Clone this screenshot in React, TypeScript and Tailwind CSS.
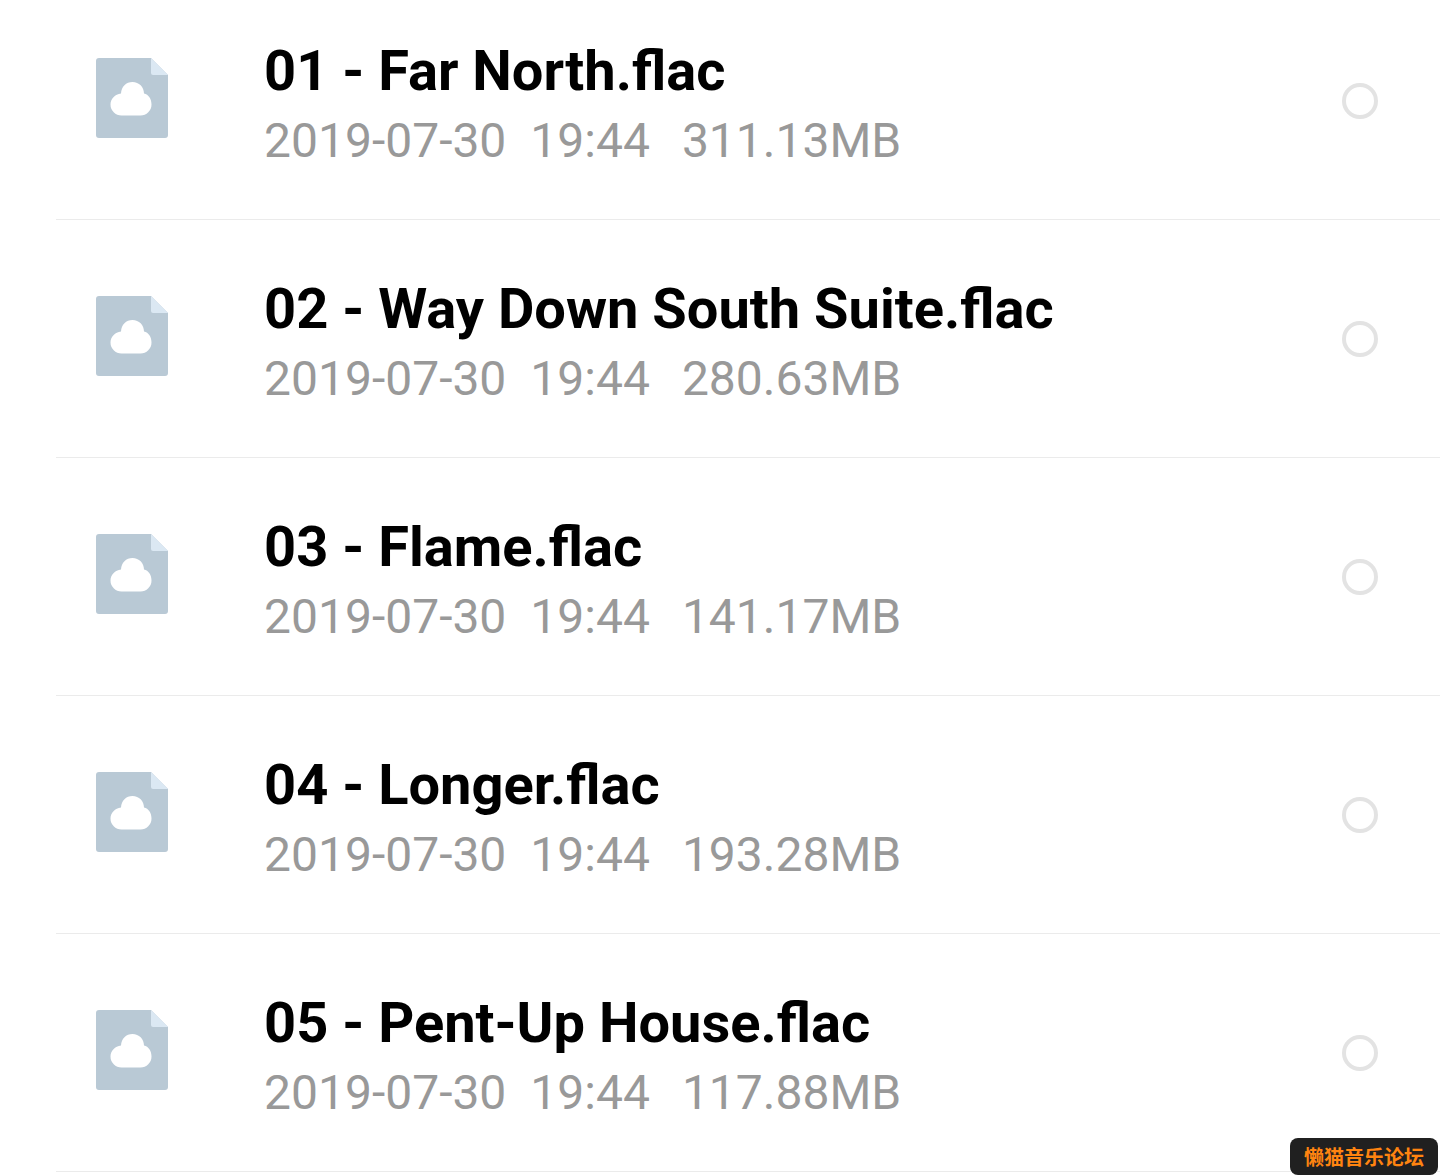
type Track = { name: string; date: string; time: string; size: string };

const tracks: Track[] = [
  { name: "01 - Far North.flac", date: "2019-07-30", time: "19:44", size: "311.13MB" },
  { name: "02 - Way Down South Suite.flac", date: "2019-07-30", time: "19:44", size: "280.63MB" },
  { name: "03 - Flame.flac", date: "2019-07-30", time: "19:44", size: "141.17MB" },
  { name: "04 - Longer.flac", date: "2019-07-30", time: "19:44", size: "193.28MB" },
  { name: "05 - Pent-Up House.flac", date: "2019-07-30", time: "19:44", size: "117.88MB" },
];

function CloudFileIcon() {
  return (
    <svg viewBox="0 0 72 80" className="mb-[5px] h-20 w-[72px] shrink-0" aria-hidden="true">
      <path d="M3 0H55L72 17V77a3 3 0 0 1-3 3H3a3 3 0 0 1-3-3V3a3 3 0 0 1 3-3Z" fill="#b9c9d5" />
      <path d="M55 0L72 17H57a2 2 0 0 1-2-2Z" fill="#dbe8f3" />
      <path
        d="M25.500 57.500a11 11 0 0 1-11-11c0-5.500 4.500-10.500 10.500-11C25.500 28.500 30 24 36.500 24S48 29 48 35.500c4.500 1 7.500 5.500 7.500 11a11 11 0 0 1-11 11Z"
        fill="#fff"
      />
    </svg>
  );
}

function TrackRow({ track }: { track: Track }) {
  return (
    <li className="ml-14 border-b border-[#ebebeb]">
      <label className="flex items-center pr-[62px] pl-10">
        <CloudFileIcon />
        <span className="ml-24 flex min-w-0 grow flex-col pt-[53px] pb-[44px]">
          <span className="text-[56px] leading-[72px] font-bold text-black">{track.name}</span>
          <span className="flex text-5xl leading-[68px] text-[#999999]">
            <span className="mr-6">{track.date}</span>
            <span className="mr-8">{track.time}</span>
            <span>{track.size}</span>
          </span>
        </span>
        <input
          type="checkbox"
          className="size-9 shrink-0 appearance-none rounded-full border-4 border-[#e3e3e3] bg-white checked:bg-[#b9c9d5]"
        />
      </label>
    </li>
  );
}

export default function App() {
  return (
    <main className="min-h-screen overflow-hidden bg-white font-['Roboto',sans-serif]">
      <ul className="-mt-[18px]">
        {tracks.map((track) => (
          <TrackRow key={track.name} track={track} />
        ))}
      </ul>
      <div className="fixed right-0.5 bottom-px rounded-lg bg-[#202020] px-3.5 py-1 font-['Noto_Sans_CJK_SC',sans-serif] text-xl leading-[29px] font-bold text-[#ff8410]">
        懒猫音乐论坛
      </div>
    </main>
  );
}
